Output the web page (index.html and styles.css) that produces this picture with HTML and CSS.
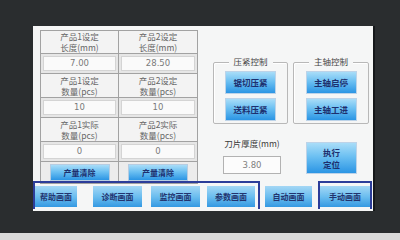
FILE: index.html
```html
<!DOCTYPE html>
<html>
<head>
<meta charset="utf-8">
<link rel="stylesheet" href="styles.css">
</head>
<body>
<div class="monitor">
  <div class="screen">
    <div class="main">
      <table class="grid">
        <colgroup><col class="c1"><col class="c2"></colgroup>
        <tr class="hrow first"><td>产品1设定<br>长度(mm)</td><td>产品2设定<br>长度(mm)</td></tr>
        <tr class="vrow"><td><div class="val">7.00</div></td><td><div class="val">28.50</div></td></tr>
        <tr class="hrow"><td>产品1设定<br>数量(pcs)</td><td>产品2设定<br>数量(pcs)</td></tr>
        <tr class="vrow"><td><div class="val">10</div></td><td><div class="val">10</div></td></tr>
        <tr class="hrow"><td>产品1实际<br>数量(pcs)</td><td>产品2实际<br>数量(pcs)</td></tr>
        <tr class="vrow"><td><div class="val">0</div></td><td><div class="val">0</div></td></tr>
        <tr class="brow"><td><div class="btn small">产量清除</div></td><td><div class="btn small">产量清除</div></td></tr>
      </table>
      <div class="right">
        <div class="groups">
          <div class="group g1">
            <span class="gtitle">压紧控制</span>
            <div class="btn gbtn">锯切压紧</div>
            <div class="btn gbtn">送料压紧</div>
          </div>
          <div class="group g2">
            <span class="gtitle">主轴控制</span>
            <div class="btn gbtn">主轴启停</div>
            <div class="btn gbtn">主轴工进</div>
          </div>
        </div>
        <div class="lower">
          <div class="blade">
            <div class="blabel">刀片厚度(mm)</div>
            <div class="binput">3.80</div>
          </div>
          <div class="btn exec">执行<br>定位</div>
        </div>
      </div>
    </div>
    <div class="nav">
      <div class="frame f1">
        <div class="btn nbtn n1">帮助画面</div>
        <div class="btn nbtn n2">诊断画面</div>
        <div class="btn nbtn n3">监控画面</div>
        <div class="btn nbtn n4">参数画面</div>
      </div>
      <div class="btn nbtn n5">自动画面</div>
      <div class="frame f2">
        <div class="btn nbtn n6">手动画面</div>
      </div>
    </div>
  </div>
</div>
<div class="floor"></div>
</body>
</html>
```
FILE: styles.css
```css
html, body {
  margin: 0;
  padding: 0;
}
body {
  width: 400px;
  height: 240px;
  background: #2a2d2f;
  overflow: hidden;
  font-family: "Noto Sans CJK SC", "DejaVu Sans", sans-serif;
}
.monitor {
  height: 233px;
  box-sizing: border-box;
  padding-top: 26px;
  padding-left: 33px;
}
.screen {
  width: 340px;
  height: 185px;
  background: #f5f6f6;
  box-shadow: 2px 0 0 #15181a;
  display: flex;
  flex-direction: column;
}
.main {
  height: 155px;
  display: flex;
  padding-left: 7px;
  box-sizing: border-box;
  padding-top: 4px;
}
.grid {
  border-collapse: collapse;
  table-layout: fixed;
  width: 157px;
  height: 146px;
}
.c1 { width: 78px; }
.c2 { width: 79px; }
.grid td {
  border: 1px solid #a2a2a2;
  padding: 0;
  text-align: center;
  vertical-align: middle;
}
.hrow td {
  height: 23px;
  background: #f3f3f3;
  color: #666;
  font-size: 8.5px;
  line-height: 11px;
}
.hrow.first td { height: 21px; }
.vrow td {
  height: 17px;
  background: #e6e6e6;
  padding: 1px 2px;
}
.val {
  height: 15px;
  box-sizing: border-box;
  background: #fafafa;
  border: 1px solid #d4d4d4;
  color: #7a7a7a;
  font-family: "DejaVu Sans", sans-serif;
  font-size: 8.5px;
  line-height: 13px;
}
.brow td {
  height: 21px;
  background: #ececec;
}
.btn {
  background: linear-gradient(#a9ddf8 0%, #6cc0f2 45%, #2b95e4 100%);
  color: #1d2f6e;
  font-weight: bold;
  text-align: center;
  box-sizing: border-box;
  box-shadow: 0 0 0 1px rgba(60, 130, 200, 0.3);
}
.small {
  width: 58px;
  height: 15px;
  margin: 0 auto;
  font-size: 8px;
  line-height: 15px;
}
.right {
  display: flex;
  flex-direction: column;
  margin-left: 15px;
  padding-top: 32px;
}
.groups {
  display: flex;
}
.group {
  position: relative;
  height: 62px;
  box-sizing: border-box;
  border: 1px solid #b8b8b8;
  border-radius: 2px;
  box-shadow: inset 1px 1px 0 #fff;
  display: flex;
  flex-direction: column;
  align-items: center;
  padding-top: 9px;
  gap: 6px;
}
.g1 { width: 75px; }
.g2 { width: 76px; margin-left: 5px; }
.gtitle {
  position: absolute;
  top: -8px;
  left: 50%;
  transform: translateX(-50%);
  background: #f5f6f6;
  padding: 0 5px;
  font-size: 8.5px;
  line-height: 12px;
  color: #444;
  white-space: nowrap;
}
.gbtn {
  width: 49px;
  height: 21px;
  font-size: 8.5px;
  line-height: 21px;
}
.lower {
  display: flex;
  margin-top: 14px;
}
.blade {
  margin-left: 10px;
  width: 58px;
  display: flex;
  flex-direction: column;
  align-items: center;
}
.blabel {
  font-size: 8.5px;
  line-height: 10px;
  color: #3a3a3a;
  white-space: nowrap;
}
.binput {
  margin-top: 8px;
  width: 58px;
  height: 18px;
  box-sizing: border-box;
  background: #fcfcfc;
  border: 1px solid #b2b2b2;
  color: #808080;
  font-family: "DejaVu Sans", sans-serif;
  font-size: 8.5px;
  line-height: 16px;
  text-align: center;
}
.exec {
  margin-left: 26px;
  margin-top: 5px;
  width: 49px;
  height: 30px;
  font-size: 8.5px;
  line-height: 12px;
  padding-top: 3px;
}
.nav {
  height: 28px;
  display: flex;
  align-items: flex-end;
}
.frame {
  height: 28px;
  box-sizing: border-box;
  border: 2px solid #2c3d99;
  border-bottom: none;
  display: flex;
  padding-top: 3px;
}
.f1 { width: 227px; }
.f2 { width: 54px; margin-left: 6px; }
.nbtn {
  height: 21px;
  font-size: 8px;
  line-height: 21px;
  background: linear-gradient(#a4d7f5 0%, #6cbeef 50%, #3499e2 100%);
  color: #23346f;
  box-shadow: none;
}
.n1 { width: 42px; }
.n2 { width: 49px; margin-left: 16px; }
.n3 { width: 49px; margin-left: 9px; }
.n4 { width: 48px; margin-left: 7px; }
.n5 { width: 47px; margin-left: 5px; margin-bottom: 2px; }
.n6 { width: 50px; }
.floor {
  height: 7px;
  background: #dadada;
}
```
